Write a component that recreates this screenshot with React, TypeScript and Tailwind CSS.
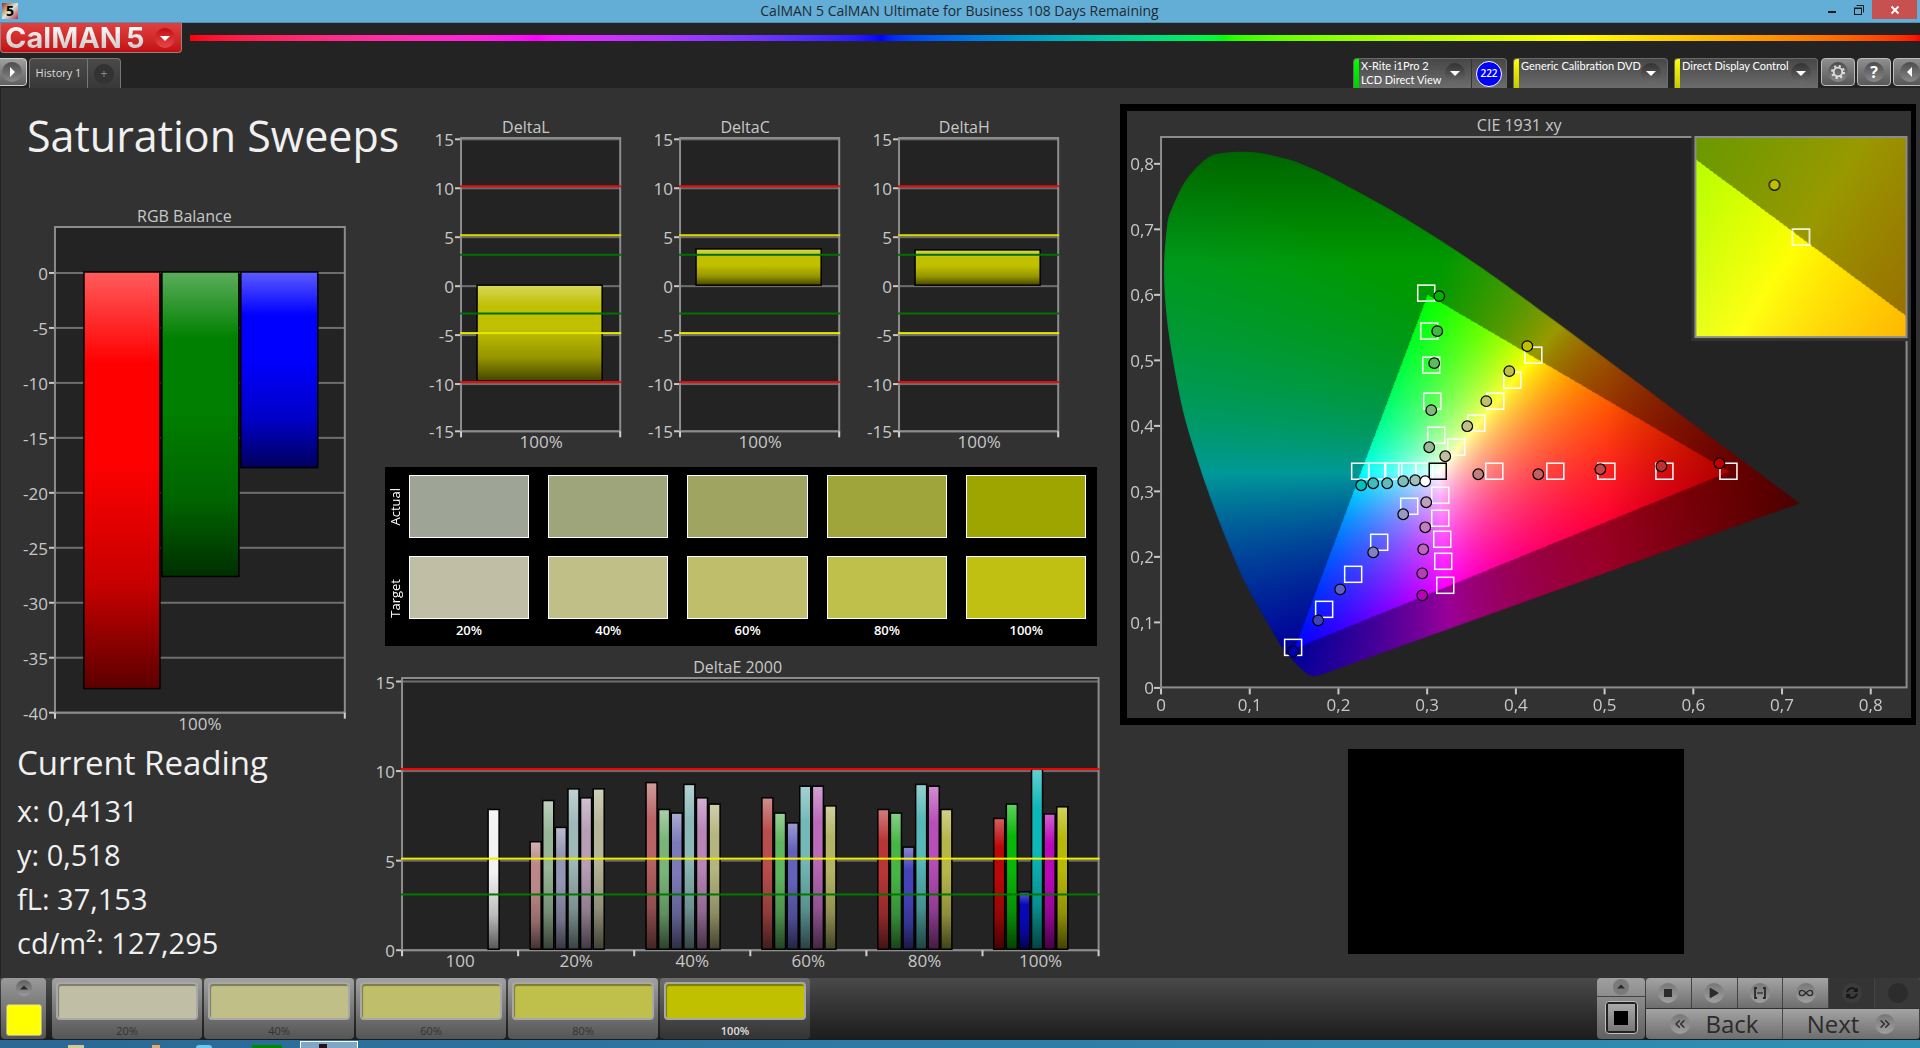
import React, { useEffect, useRef } from 'react';
import { FaPlay, FaSyncAlt } from 'react-icons/fa';
import { ChevronsLeft, ChevronsRight, Infinity as InfinityIcon } from 'lucide-react';

type Bar = { x: number; w: number; value: number; color: string };
type Line = { value: number; color: string };

const DELTA_LINES: Line[] = [
  { value: 10, color: '#e80c0c' },
  { value: 5, color: '#d8d800' },
  { value: 3, color: '#007000' },
  { value: -3, color: '#007000' },
  { value: -5, color: '#e8e800' },
  { value: -10, color: '#e80c0c' },
];

const DELTAS = [
  { title: 'DeltaL', value: -9.8 },
  { title: 'DeltaC', value: 3.7 },
  { title: 'DeltaH', value: 3.6 },
];

const DELTA_E_GROUPS = [
  { colors: ['#b98787', '#97b597', '#9595b5', '#9fb8b8', '#b79fb7', '#b5b597'], values: [6.0, 8.3, 6.8, 8.95, 8.45, 8.95] },
  { colors: ['#b96464', '#79b579', '#7b7bb9', '#8db8b8', '#b985b9', '#b5b57f'], values: [9.3, 7.8, 7.6, 9.2, 8.45, 8.1] },
  { colors: ['#b94e4e', '#60b560', '#6262b9', '#74b8b8', '#b96ab9', '#b5b567'], values: [8.45, 7.6, 7.05, 9.1, 9.1, 8.0] },
  { colors: ['#b93636', '#46b546', '#4444b9', '#58b8b8', '#b94eb9', '#b5b54c'], values: [7.8, 7.6, 5.7, 9.2, 9.1, 7.8] },
  { colors: ['#b90808', '#08b808', '#0808b9', '#0cb8b8', '#b908b9', '#b8b808'], values: [7.3, 8.1, 3.2, 10.05, 7.55, 7.95] },
];

const PATCHES = [
  { label: '20%', actual: '#9fa596', target: '#c0bfa5' },
  { label: '40%', actual: '#9fa57b', target: '#c0bf87' },
  { label: '60%', actual: '#9fa561', target: '#bfbf6b' },
  { label: '80%', actual: '#9fa53a', target: '#bfbf4c' },
  { label: '100%', actual: '#9fa500', target: '#c0c012' },
];

const SWATCHES = ['#c0bfa5', '#c0bf87', '#bfbf6b', '#bfbf4c', '#c0c000'];

const READINGS = ['x: 0,4131', 'y: 0,518', 'fL: 37,153', 'cd/m²: 127,295'];

// Outline of the spectral locus, in plot pixels
const LOCUS: [number, number][] = [
  [192, 539], [181, 538], [165, 523], [155, 511], [122, 454], [105, 417], [82, 358], [60, 290], [49, 241],
  [40, 184], [37, 135], [40, 90], [45, 72], [59, 44], [79, 23], [95, 17], [125, 16], [152, 21], [172, 27],
  [199, 39], [235, 58], [279, 83], [325, 112], [369, 142], [432, 188],
];

const TARGETS: [number, number][] = [
  [233, 335], [250, 335], [266, 335], [280, 335], [297, 335],
  [367, 335], [428, 335], [479, 335], [537, 335], [601, 335],
  [299, 157], [302, 195], [304, 229], [305, 265], [309, 299],
  [406, 219], [385, 244], [368, 265], [349, 287], [329, 311],
  [166, 511], [197, 473], [226, 438], [252, 406], [282, 370],
  [313, 359], [313, 382], [315, 403], [316, 425], [318, 449],
];

const ACTUALS: [number, number, string][] = [
  [312, 160, '#00b300'], [310, 195, '#40b840'], [307, 227, '#60b860'], [304, 274, '#80b880'], [302, 311, '#98b898'],
  [400, 210, '#c0c000'], [382, 235, '#bfbf48'], [359, 265, '#c0c068'], [340, 290, '#c0c084'], [318, 320, '#c0c0a0'],
  [351, 338, '#c08080'], [411, 338, '#c06060'], [473, 333, '#c04848'], [534, 330, '#c03030'], [592, 327, '#c00000'],
  [234, 349, '#00c0c0'], [246, 347, '#40bcbc'], [260, 347, '#60bcbc'], [276, 345, '#80bcbc'], [288, 344, '#a0c0c0'],
  [276, 378, '#9898c0'], [246, 416, '#8080c0'], [213, 453, '#6060c0'], [191, 484, '#4040b8'], [166, 515, '#0000b0'],
  [299, 366, '#c0a0c0'], [298, 391, '#c080c0'], [296, 413, '#c064c0'], [295, 437, '#b83cb8'], [295, 459, '#b800b8'],
  [298, 345, '#ffffff'],
];

function smoothPath(points: [number, number][]) {
  let d = `M${points[0][0]} ${points[0][1]}`;
  for (let i = 0; i < points.length - 1; i++) {
    const p0 = points[Math.max(i - 1, 0)];
    const p1 = points[i];
    const p2 = points[i + 1];
    const p3 = points[Math.min(i + 2, points.length - 1)];
    d += ` C${p1[0] + (p2[0] - p0[0]) / 6} ${p1[1] + (p2[1] - p0[1]) / 6} ${p2[0] - (p3[0] - p1[0]) / 6} ${p2[1] - (p3[1] - p1[1]) / 6} ${p2[0]} ${p2[1]}`;
  }
  return d;
}

const LOCUS_PATH = `${smoothPath(LOCUS)} L672 367 Z`;

// Chromaticity to display RGB, dimmed outside the Rec.709 triangle
function xyToRgb(x: number, y: number) {
  const yy = Math.max(y, 0.002);
  const X = x / yy;
  const Z = (1 - x - yy) / yy;
  const r = 3.2406 * X - 1.5372 - 0.4986 * Z;
  const g = -0.9689 * X + 1.8758 + 0.0415 * Z;
  const b = 0.0557 * X - 0.204 + 1.057 * Z;
  const inside = r >= 0 && g >= 0 && b >= 0;
  const top = Math.max(r, g, b);
  let gain = inside ? 1 : 0.6;
  if (x > 0.5) gain *= 1 - (x - 0.5) * 2.3;
  if (y > 0.65) gain *= 1 - (y - 0.65) * 2;
  return [r, g, b].map((c) => (Math.max(c, 0) / top) * gain * 255);
}

type GamutProps = { width: number; height: number; x0: number; y0: number; sx: number; sy: number; clip?: boolean };

function Gamut({ width, height, x0, y0, sx, sy, clip }: GamutProps) {
  const ref = useRef<HTMLCanvasElement>(null);

  useEffect(() => {
    const canvas = ref.current;
    const ctx = canvas?.getContext('2d');
    if (!canvas || !ctx) return;
    const buffer = document.createElement('canvas');
    buffer.width = width;
    buffer.height = height;
    const bctx = buffer.getContext('2d')!;
    const img = bctx.createImageData(width, height);
    for (let py = 0; py < height; py++) {
      for (let px = 0; px < width; px++) {
        const [r, g, b] = xyToRgb((px - x0) / sx, (y0 - py) / sy);
        const i = (py * width + px) * 4;
        img.data[i] = r;
        img.data[i + 1] = g;
        img.data[i + 2] = b;
        img.data[i + 3] = 255;
      }
    }
    bctx.putImageData(img, 0, 0);
    ctx.clearRect(0, 0, width, height);
    ctx.save();
    if (clip) ctx.clip(new Path2D(LOCUS_PATH));
    ctx.drawImage(buffer, 0, 0);
    ctx.restore();
  }, [width, height, x0, y0, sx, sy, clip]);

  return <canvas ref={ref} width={width} height={height} className="block h-full w-full" />;
}

type ChartProps = {
  title: string;
  width: number;
  height: number;
  left: number;
  right: number;
  bottom: number;
  zero: number;
  unit: number;
  ticks: number[];
  bars: Bar[];
  lines?: Line[];
  xTicks: number[];
  xLabels: { x: number; text: string }[];
};

function BarChart({ title, width, height, left, right, bottom, zero, unit, ticks, bars, lines = [], xTicks, xLabels }: ChartProps) {
  const yOf = (v: number) => zero - v * unit;
  const id = title.replace(/\s+/g, '-').toLowerCase();

  return (
    <figure className="min-w-0 flex-1">
      <figcaption className="text-center text-base leading-5 text-[#c8c8c8]">{title}</figcaption>
      <svg viewBox={`0 0 ${width} ${height}`} className="block w-full overflow-visible" role="img" aria-label={title}>
        <defs>
          <linearGradient id={`${id}-shade`} x1="0" y1="0" x2="0" y2="1">
            <stop offset="0" stopColor="#fff" stopOpacity="0.36" />
            <stop offset="0.22" stopColor="#fff" stopOpacity="0" />
            <stop offset="0.45" stopColor="#000" stopOpacity="0" />
            <stop offset="0.75" stopColor="#000" stopOpacity="0.22" />
            <stop offset="1" stopColor="#000" stopOpacity="0.64" />
          </linearGradient>
        </defs>
        <rect x={left} y="1" width={right - left} height={bottom - 1} fill="#232323" />
        {ticks.map((t) => (
          <g key={t}>
            <rect x={left - 6} y={Math.min(yOf(t), bottom) - 1} width="6" height="2" fill="#c8c8c8" />
            <rect x={left} y={Math.min(yOf(t), bottom) - 1} width={right - left} height="2" fill="#6e6e6e" />
            <text x={left - 7} y={Math.min(yOf(t), bottom) + 7} textAnchor="end" fontSize="17" fill="#c8c8c8">{t}</text>
          </g>
        ))}
        <rect x={left} y="1" width={right - left} height={bottom - 1} fill="none" stroke="#8c8c8c" strokeWidth="2" />
        {bars.map((b) => {
          const y = Math.min(yOf(b.value), zero) - 1;
          const h = Math.abs(b.value) * unit;
          return (
            <g key={b.x}>
              <rect x={b.x} y={y} width={b.w} height={h} fill={b.color} />
              <rect x={b.x} y={y} width={b.w} height={h} fill={`url(#${id}-shade)`} stroke="#000" strokeWidth="1.5" />
            </g>
          );
        })}
        {lines.map((l) => (
          <rect key={l.value} x={left - 1} y={yOf(l.value) - 3} width={right - left + 2} height="2" fill={l.color} />
        ))}
        {xTicks.map((x) => (
          <rect key={x} x={x - 1} y={bottom} width="2" height="6" fill="#d0d0d0" />
        ))}
        {xLabels.map((l) => (
          <text key={l.text} x={l.x} y={bottom + 17} textAnchor="middle" fontSize="17" fill="#c8c8c8">{l.text}</text>
        ))}
      </svg>
    </figure>
  );
}

function CieChart() {
  return (
    <figure className="border-t-[7px] border-r-[5px] border-b-[7px] border-l-[7px] border-black bg-[#323232] pt-1">
      <figcaption className="pb-px text-center text-base leading-5 text-[#c8c8c8]">CIE 1931 xy</figcaption>
      <svg viewBox="0 0 783 582" className="block w-full" role="img" aria-label="CIE 1931 xy chromaticity">
        <rect x="34" y="1" width="745" height="550" fill="#232323" stroke="#8c8c8c" strokeWidth="2" />
        <foreignObject x="0" y="0" width="783" height="551">
          <Gamut width={783} height={551} x0={34} y0={551} sx={886.5} sy={654.6} clip />
        </foreignObject>
        {[0, 1, 2, 3, 4, 5, 6, 7, 8].map((n) => (
          <g key={n} fill="#c8c8c8" fontSize="17">
            <rect x="27" y={550.5 - n * 65.46} width="6" height="2" />
            <text x="27" y={558 - n * 65.46} textAnchor="end">{n ? `0,${n}` : '0'}</text>
            <rect x={33 + n * 88.65} y="552" width="2" height="6" />
            <text x={34 + n * 88.65} y="575" textAnchor="middle">{n ? `0,${n}` : '0'}</text>
          </g>
        ))}
        {TARGETS.map(([x, y]) => (
          <rect key={`${x}-${y}`} x={x - 8.5} y={y - 8} width="17" height="16" fill="none" stroke="#fff" strokeWidth="1.5" />
        ))}
        <rect x="302" y="327" width="17" height="16" fill="none" stroke="#000" strokeWidth="1.5" />
        {ACTUALS.map(([x, y, color]) => (
          <circle key={`${x}-${y}`} cx={x} cy={y} r="5.3" fill={color} stroke="#000" strokeWidth="1.2" />
        ))}
        <rect x="564" y="0" width="219" height="205" fill="#323232" />
        <foreignObject x="568" y="1" width="211" height="200">
          <Gamut width={211} height={200} x0={105 - 0.4193 * 4300} y0={100 + 0.5053 * 4030} sx={4300} sy={4030} />
        </foreignObject>
        <rect x="568" y="1" width="211" height="200" fill="none" stroke="#8c8c8c" strokeWidth="2" />
        <rect x="665" y="93" width="17" height="16" fill="none" stroke="#fff" strokeWidth="1.5" />
        <circle cx="647" cy="49" r="5.3" fill="#c0c000" stroke="#000" strokeWidth="1.2" />
      </svg>
    </figure>
  );
}

function Caret({ dir }: { dir: 'down' | 'up' | 'left' | 'right' }) {
  const points = {
    down: '5,8 15,8 10,13',
    up: '5,12 15,12 10,7',
    left: '12,5 12,15 7,10',
    right: '8,5 8,15 13,10',
  };
  return (
    <svg viewBox="0 0 20 20" className="h-5 w-5" aria-hidden="true">
      <polygon points={points[dir]} fill="currentColor" />
    </svg>
  );
}

type DeviceTabProps = { lines: string[]; stripe: string; width: string; badge?: string };

function DeviceTab({ lines, stripe, width, badge }: DeviceTabProps) {
  return (
    <div className={`flex h-[30px] overflow-hidden rounded-t border border-b-0 border-[#6a6a6a] bg-linear-to-b from-[#474747] to-[#6c6c6c] ${width}`}>
      <span className={`w-[5px] shrink-0 bg-linear-to-b ${stripe}`} />
      <button type="button" className="flex flex-1 items-start justify-between pl-0.5 text-left font-['Lato',sans-serif] text-[11px] leading-[14px] text-white">
        <span className="whitespace-nowrap">
          {lines.map((l) => (
            <span key={l} className="block">{l}</span>
          ))}
        </span>
        <span className="mt-1 mr-1.5 flex h-5 w-5 items-center justify-center rounded-full bg-linear-to-b from-[#333] to-[#6a6a6a]">
          <Caret dir="down" />
        </span>
      </button>
      {badge && (
        <span className="flex items-center border-l border-[#333] px-1">
          <span className="flex h-[26px] w-[26px] items-center justify-center rounded-full border border-white bg-[#0000ff] text-[10px] font-semibold text-white">{badge}</span>
        </span>
      )}
    </div>
  );
}

const toolButton = 'flex h-7 w-[34px] shrink-0 items-center justify-center rounded border border-[#bdbdbd] bg-linear-to-b from-[#8f8f8f] to-[#585858] text-white';
const toolRound = 'flex h-5 w-5 items-center justify-center rounded-full bg-linear-to-b from-[#4c4c4c] to-[#8a8a8a]';

function Header() {
  return (
    <header>
      <div className="flex h-[23px] items-start border-b border-[#4f8fb4] bg-[#62aed6]">
        <div className="flex flex-1 pt-[3px] pl-0.5">
          <span className="flex h-4 w-4 items-center justify-center bg-linear-to-br from-[#8a2f1c] via-[#d9e8d0] to-[#b5124d] text-sm font-bold leading-4 text-black">5</span>
        </div>
        <h1 className="text-sm leading-[22px] text-[#1e2a33]">CalMAN 5 CalMAN Ultimate for Business 108 Days Remaining</h1>
        <div className="flex flex-1 justify-end pr-[3px] text-[#1a1a1a]">
          <button type="button" aria-label="Minimize" className="flex h-[19px] w-[26px] items-center justify-center">
            <svg viewBox="0 0 10 10" className="h-2.5 w-2.5"><rect x="1" y="6" width="8" height="2" fill="currentColor" /></svg>
          </button>
          <button type="button" aria-label="Restore" className="flex h-[19px] w-[27px] items-center justify-center">
            <svg viewBox="0 0 10 10" className="h-2.5 w-2.5" fill="none" stroke="currentColor">
              <rect x="0.5" y="3" width="7" height="6.5" />
              <path d="M.5 3.5h7M2.5 .5h7v7" />
            </svg>
          </button>
          <button type="button" aria-label="Close" className="flex h-[19px] w-[45px] items-center justify-center bg-[#c75050] text-white">
            <svg viewBox="0 0 10 10" className="h-2.5 w-2.5" stroke="currentColor" strokeWidth="1.8"><path d="M1.5 1.5l7 7M8.5 1.5l-7 7" /></svg>
          </button>
        </div>
      </div>

      <div className="flex items-start gap-2">
        <button type="button" aria-label="CalMAN 5 menu" className="flex h-[30px] w-[182px] items-center justify-between rounded-b border border-t-0 border-[#9a8080] bg-linear-to-b from-[#e04040] to-[#c40c10] pr-1.5 pl-1">
          <span className="flex gap-1 font-['Inter',sans-serif] text-[29px] leading-[26px] font-bold">
            <span className="bg-linear-to-b from-white to-[#c4c4c4] bg-clip-text text-transparent">CalMAN</span>
            <span className="bg-linear-to-b from-white to-[#c4c4c4] bg-clip-text text-transparent">5</span>
          </span>
          <span className="flex h-5 w-5 items-center justify-center rounded-full bg-linear-to-b from-[#c00810] to-[#e84448] text-white"><Caret dir="down" /></span>
        </button>
        <div className="mt-3 h-1.5 flex-1 bg-linear-to-r from-[#ff0000] from-0% via-[#ff00ff] via-20% to-[#0000ff] to-40%">
          <div className="ml-[40%] h-full bg-linear-to-r from-[#0000ff] from-0% via-[#00ff00] via-33% to-[#ffff00] to-67%">
            <div className="ml-[67%] h-full bg-linear-to-r from-[#ffff00] to-[#ff0000]" />
          </div>
        </div>
      </div>

      <nav className="mt-[5px] flex h-[30px] items-start justify-between overflow-hidden" aria-label="Session">
        <div className="flex items-start">
          <button type="button" aria-label="Expand panel" className="-ml-1 flex h-7 w-[31px] items-center justify-center rounded border border-[#cfcfcf] bg-linear-to-b from-[#a0a0a0] to-[#606060] text-white">
            <span className={toolRound}><Caret dir="right" /></span>
          </button>
          <div className="ml-0.5 flex h-[30px] rounded-t border border-b-0 border-[#777] bg-linear-to-b from-[#4a4a4a] to-[#383838]">
            <button type="button" className="w-[58px] border-r border-[#777] text-[11px] text-[#dcdcdc]">History 1</button>
            <button type="button" aria-label="Add tab" className="flex w-8 items-center justify-center">
              <span className="flex h-5 w-5 items-center justify-center rounded-full bg-[#333] text-xs text-[#888]">+</span>
            </button>
          </div>
        </div>
        <div className="-mr-[7px] flex items-start">
          <div className="mr-1.5"><DeviceTab lines={['X-Rite i1Pro 2', 'LCD Direct View']} stripe="from-[#00ff00] to-[#00d000]" width="w-[154px]" badge="222" /></div>
          <div className="mr-1.5"><DeviceTab lines={['Generic Calibration DVD']} stripe="from-[#ffff00] to-[#c8c800]" width="w-[155px]" /></div>
          <div className="mr-[3px]"><DeviceTab lines={['Direct Display Control']} stripe="from-[#ffff00] to-[#c8c800]" width="w-36" /></div>
          <div className="flex gap-0.5">
            <button type="button" aria-label="Settings" className={toolButton}>
              <span className={toolRound}>
                <svg viewBox="0 0 16 16" className="h-4 w-4" fill="none" stroke="#e0e0e0">
                  <circle cx="8" cy="8" r="4.3" strokeWidth="1.8" />
                  <circle cx="8" cy="8" r="6" strokeWidth="2" strokeDasharray="2.2 2.51" />
                </svg>
              </span>
            </button>
            <button type="button" aria-label="Help" className={toolButton}><span className={`${toolRound} text-base font-bold`}>?</span></button>
            <button type="button" aria-label="Collapse" className={toolButton}><span className={toolRound}><Caret dir="left" /></span></button>
          </div>
        </div>
      </nav>
    </header>
  );
}

const stepButton = 'flex h-[30px] flex-1 items-center justify-center border-r border-[#444] bg-linear-to-b from-[#a4a4a4] to-[#6e6e6e] text-[#2b2b2b]';
const stepRound = 'flex h-5 w-5 items-center justify-center rounded-full bg-linear-to-b from-[#777] to-[#a0a0a0]';

function Footer() {
  return (
    <footer>
      <div className="flex h-[62px] items-start justify-between bg-linear-to-b from-[#4a4a4a] to-[#1c1c1c] pl-px">
        <div className="flex">
          <button type="button" aria-label="Pattern colour" className="mr-1.5 flex h-[61px] w-[45px] flex-col items-center rounded bg-linear-to-b from-[#9a9a9a] to-[#555] pt-0.5">
            <span className="flex h-4 w-4 items-center justify-center rounded-full bg-linear-to-b from-[#606060] to-[#999] text-[#2b2b2b]"><Caret dir="up" /></span>
            <span className="mt-2 h-8 w-9 rounded-[3px] border border-[#aaa] bg-[#ffff00]" />
          </button>
          <div className="flex gap-0.5">
            {SWATCHES.map((color, i) => (
              <button
                key={color}
                type="button"
                className={`flex h-[61px] w-[150px] flex-col items-center rounded px-1 pt-1 text-[11px] leading-[14px] ${i === 4 ? 'bg-linear-to-b from-[#6e6e6e] to-[#333] font-semibold text-[#e0e0e0]' : 'bg-linear-to-b from-[#a2a2a2] to-[#555] text-[#333]'}`}
              >
                <span className="mb-1 h-[38px] w-full rounded border-2 border-[#a8a8a8] shadow-[inset_1px_2px_1px_rgba(0,0,0,0.35)]" style={{ backgroundColor: color }} />
                {PATCHES[i].label}
              </button>
            ))}
          </div>
        </div>
        <div className="flex gap-px">
          <div className="flex h-[61px] w-12 flex-col overflow-hidden rounded bg-linear-to-b from-[#a0a0a0] to-[#606060]">
            <button type="button" aria-label="More" className="flex h-[19px] items-center justify-center border-b border-[#444] text-[#2b2b2b]">
              <span className="flex h-4 w-4 items-center justify-center rounded-full bg-[#7a7a7a]"><Caret dir="up" /></span>
            </button>
            <button type="button" aria-label="Pattern window" className="mx-auto mt-1 flex h-[33px] w-[33px] items-center justify-center rounded border border-[#c0c0c0] bg-[#222]">
              <span className="flex h-[27px] w-[27px] items-center justify-center bg-linear-to-b from-[#aaa] to-[#777]"><span className="h-3.5 w-3.5 bg-black" /></span>
            </button>
          </div>
          <div className="w-[274px]">
            <div className="flex overflow-hidden rounded-t">
              <button type="button" aria-label="Stop" className={stepButton}><span className={stepRound}><span className="h-2 w-2 bg-[#2b2b2b]" /></span></button>
              <button type="button" aria-label="Play" className={stepButton}><span className={stepRound}><FaPlay className="h-2.5 w-2.5" /></span></button>
              <button type="button" aria-label="Read series" className={stepButton}>
                <span className={stepRound}>
                  <svg viewBox="0 0 14 12" className="h-3 w-3.5" fill="none" stroke="currentColor" strokeWidth="1.8">
                    <path d="M4 1H2v10h2M10 1h2v10h-2" />
                    <path d="M4.5 6h5" strokeDasharray="1.2 0.7" />
                  </svg>
                </span>
              </button>
              <button type="button" aria-label="Continuous" className={stepButton}><span className={stepRound}><InfinityIcon className="h-4 w-4" /></span></button>
              <button type="button" aria-label="Refresh" disabled className="flex h-[30px] flex-1 items-center justify-center border-r border-[#444] bg-[#343434] text-[#161616]"><span className="flex h-5 w-5 items-center justify-center rounded-full bg-[#3c3c3c]"><FaSyncAlt className="h-3 w-3" /></span></button>
              <button type="button" aria-label="Record" disabled className="flex h-[30px] flex-1 items-center justify-center bg-[#383838]"><span className="h-5 w-5 rounded-full bg-[#2c2c2c]" /></button>
            </div>
            <div className="mt-px flex overflow-hidden rounded-b text-2xl font-medium text-[#2b2b2b]">
              <button type="button" className={`${stepButton} gap-4`}><span className={stepRound}><ChevronsLeft className="h-4 w-4" /></span>Back</button>
              <button type="button" className={`${stepButton} gap-4`}>Next<span className={stepRound}><ChevronsRight className="h-4 w-4" /></span></button>
            </div>
          </div>
        </div>
      </div>
      <div className="flex h-2 items-end overflow-hidden bg-linear-to-r from-[#2a6896] to-[#3090b4]">
        <span className="ml-[68px] h-[3px] w-4 bg-[#d8c890]" />
        <span className="ml-[68px] h-[3px] w-2 bg-[#e8a868]" />
        <span className="ml-9 h-[3px] w-4 rounded-t-full bg-[#6cc8f0]" />
        <span className="ml-10 h-[3px] w-[30px] bg-[#008a00]" />
        <span className="ml-[18px] flex h-[7px] w-[58px] items-end justify-center border border-b-0 border-white bg-[#7fa6c2]"><span className="mr-3 h-1 w-2 bg-[#2a1010]" /></span>
      </div>
    </footer>
  );
}

export default function App() {
  const deltaEBars: Bar[] = [{ x: 113, w: 11, value: 7.8, color: '#f2f2f4' }];
  DELTA_E_GROUPS.forEach((g, gi) => {
    g.values.forEach((value, i) => {
      deltaEBars.push({ x: 155 + gi * 115.8 + i * 12.6, w: 11, value, color: g.colors[i] });
    });
  });

  return (
    <div className="flex min-h-screen flex-col bg-[#232323] font-['Open_Sans',sans-serif]">
      <Header />

      <main className="grid flex-1 grid-cols-[minmax(0,374fr)_minmax(0,742fr)_minmax(0,804fr)] items-start border-l border-[#232323] bg-[#323232]">
        <section className="pt-[18px]">
          <h2 className="pl-[26px] text-[43px] leading-[60px] whitespace-nowrap text-[#f0f0f0]">Saturation Sweeps</h2>
          <div className="mt-10 mr-7 ml-[21px] flex">
            <BarChart
              title="RGB Balance"
              width={325}
              height={509}
              left={33}
              right={323}
              bottom={487}
              zero={47}
              unit={11}
              ticks={[0, -5, -10, -15, -20, -25, -30, -35, -40]}
              bars={[
                { x: 62, w: 76, value: -37.9, color: '#ff0000' },
                { x: 140, w: 77, value: -27.7, color: '#008000' },
                { x: 219, w: 77, value: -17.8, color: '#0000ff' },
              ]}
              xTicks={[33, 323]}
              xLabels={[{ x: 178, text: '100%' }]}
            />
          </div>
          <div className="mt-2 pl-4 text-[#f0f0f0]">
            <h3 className="text-[33px] leading-10">Current Reading</h3>
            <ul className="mt-1.5 text-[29px] leading-[44px]">
              {READINGS.map((r) => (
                <li key={r}>{r}</li>
              ))}
            </ul>
          </div>
        </section>

        <section className="pt-[29px]">
          <div className="flex gap-[27px] pr-14 pl-[55px]">
            {DELTAS.map((d) => (
              <BarChart
                key={d.title}
                title={d.title}
                width={192}
                height={318}
                left={31}
                right={190}
                bottom={294}
                zero={149}
                unit={9.78}
                ticks={[15, 10, 5, 0, -5, -10, -15]}
                bars={[{ x: 47, w: 125, value: d.value, color: '#c0c000' }]}
                lines={DELTA_LINES}
                xTicks={[31, 190]}
                xLabels={[{ x: 111, text: '100%' }]}
              />
            ))}
          </div>

          <div className="mt-3 mr-[19px] ml-2.5 bg-black pt-2 pr-[11px] pb-1.5 text-[13px] leading-5 text-white">
            {(['actual', 'target'] as const).map((kind) => (
              <div key={kind} className="mb-[18px] flex last-of-type:mb-0">
                <div className="flex w-6 items-center justify-center pr-1">
                  <span className="rotate-180 font-medium [writing-mode:vertical-rl]">{kind === 'actual' ? 'Actual' : 'Target'}</span>
                </div>
                <div className="flex flex-1 gap-[19px]">
                  {PATCHES.map((p) => (
                    <div key={p.label} className="flex-1">
                      <div className="h-[63px] border border-white" style={{ backgroundColor: p[kind] }} />
                      {kind === 'target' && <p className="pt-px text-center font-semibold">{p.label}</p>}
                    </div>
                  ))}
                </div>
              </div>
            ))}
          </div>

          <div className="mt-[11px] mr-4 flex">
            <BarChart
              title="DeltaE 2000"
              width={725}
              height={293}
              left={27}
              right={723}
              bottom={273}
              zero={273}
              unit={17.9}
              ticks={[15, 10, 5, 0]}
              bars={deltaEBars}
              lines={[
                { value: 10, color: '#ff0000' },
                { value: 5, color: '#f0f000' },
                { value: 3, color: '#007800' },
              ]}
              xTicks={[27, 143, 259, 375, 491, 607, 723]}
              xLabels={['100', '20%', '40%', '60%', '80%', '100%'].map((text, i) => ({ x: 85 + i * 116, text }))}
            />
          </div>
        </section>

        <section className="pt-4 pr-1 pl-1">
          <CieChart />
          <div className="pr-1">
            <div className="mx-auto mt-6 h-[205px] w-[336px] bg-black" />
          </div>
        </section>
      </main>

      <Footer />
    </div>
  );
}
